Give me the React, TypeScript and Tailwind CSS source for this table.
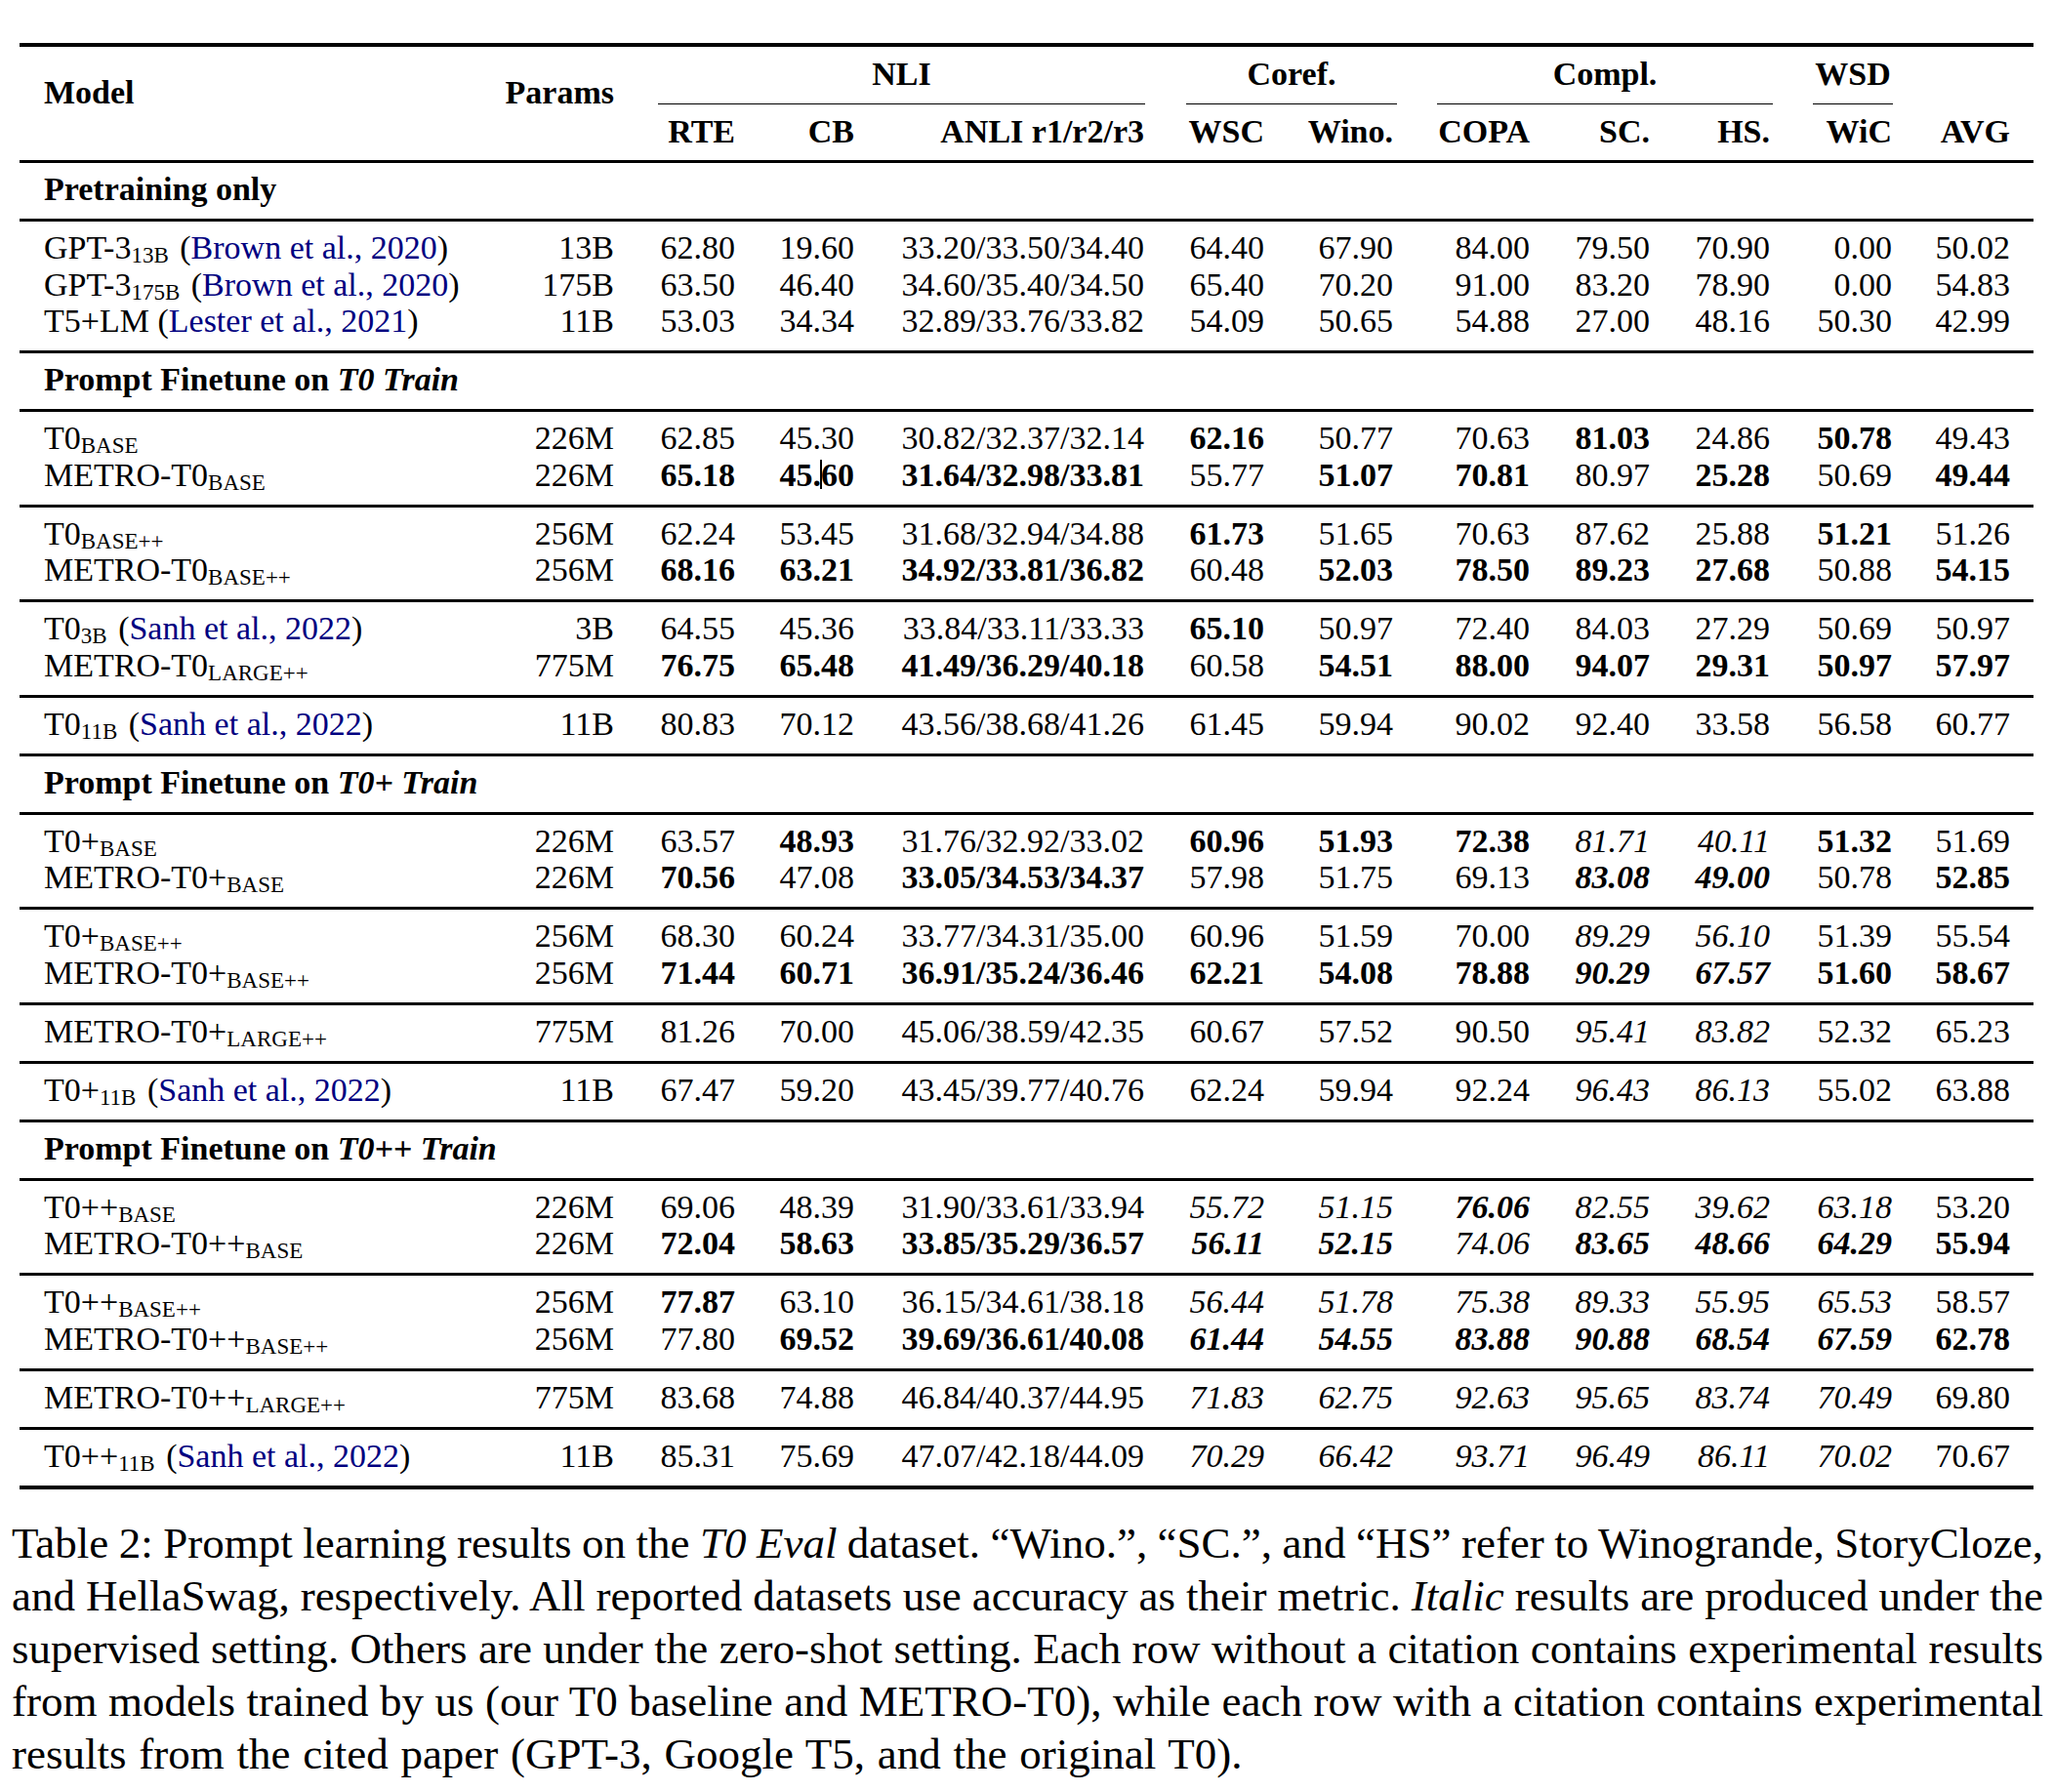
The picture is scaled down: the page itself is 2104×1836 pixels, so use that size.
import React from "react";

const GRID =
  "grid grid-cols-[455px_129px_124px_122px_297px_123px_132px_140px_123px_123px_125px_121px]";

type Row = { m: string; s?: string; cite?: string; p: string; v: string[] };

function Num({ c }: { c: string }) {
  let cls = "text-right whitespace-nowrap";
  let t = c;
  if (c.startsWith("bi:")) {
    cls += " font-bold italic";
    t = c.slice(3);
  } else if (c.startsWith("b:")) {
    cls += " font-bold";
    t = c.slice(2);
  } else if (c.startsWith("i:")) {
    cls += " italic";
    t = c.slice(2);
  }
  if (t.includes("|")) {
    const [a, b] = t.split("|");
    return (
      <div className={cls}>
        {a}
        <span className="relative inline-block w-0 h-0">
          <span className="absolute left-[-1px] top-[-27px] w-[1.5px] h-[30px] bg-black" />
        </span>
        {b}
      </div>
    );
  }
  return <div className={cls}>{t}</div>;
}

function Name({ m, s, cite }: { m: string; s?: string; cite?: string }) {
  return (
    <div className="whitespace-nowrap">
      {m}
      {s && <span className="text-[23px] leading-[0] align-[-4px]">{s}</span>}
      {cite && (
        <>
          {" "}
          <span className={s ? "ml-[3px]" : ""}>(</span>
          <span className="text-[#000080]">{cite}</span>
          {")"}
        </>
      )}
    </div>
  );
}

function Rule({ h = "h-[3px]" }: { h?: string }) {
  return <div className={`${h} bg-black`} />;
}

function Group({ rows }: { rows: Row[] }) {
  return (
    <div className={`${GRID} pl-[25px] pr-[24px] pt-[8px] pb-[11.5px]`}>
      {rows.map((r, i) => (
        <React.Fragment key={i}>
          <Name m={r.m} s={r.s} cite={r.cite} />
          <div className="text-right">{r.p}</div>
          {r.v.map((c, j) => (
            <Num key={j} c={c} />
          ))}
        </React.Fragment>
      ))}
    </div>
  );
}

function SectionTitle({ children }: { children: React.ReactNode }) {
  return <div className="pl-[25px] pt-[8px] pb-[11.5px] font-bold">{children}</div>;
}

const B = "Brown et al., 2020";
const S = "Sanh et al., 2022";

const sections: { title: React.ReactNode; groups: Row[][] }[] = [
  {
    title: <>Pretraining only</>,
    groups: [
      [
        { m: "GPT-3", s: "13B", cite: B, p: "13B", v: ["62.80", "19.60", "33.20/33.50/34.40", "64.40", "67.90", "84.00", "79.50", "70.90", "0.00", "50.02"] },
        { m: "GPT-3", s: "175B", cite: B, p: "175B", v: ["63.50", "46.40", "34.60/35.40/34.50", "65.40", "70.20", "91.00", "83.20", "78.90", "0.00", "54.83"] },
        { m: "T5+LM", cite: "Lester et al., 2021", p: "11B", v: ["53.03", "34.34", "32.89/33.76/33.82", "54.09", "50.65", "54.88", "27.00", "48.16", "50.30", "42.99"] },
      ],
    ],
  },
  {
    title: (
      <>
        Prompt Finetune on <i>T0 Train</i>
      </>
    ),
    groups: [
      [
        { m: "T0", s: "BASE", p: "226M", v: ["62.85", "45.30", "30.82/32.37/32.14", "b:62.16", "50.77", "70.63", "b:81.03", "24.86", "b:50.78", "49.43"] },
        { m: "METRO-T0", s: "BASE", p: "226M", v: ["b:65.18", "b:45.|60", "b:31.64/32.98/33.81", "55.77", "b:51.07", "b:70.81", "80.97", "b:25.28", "50.69", "b:49.44"] },
      ],
      [
        { m: "T0", s: "BASE++", p: "256M", v: ["62.24", "53.45", "31.68/32.94/34.88", "b:61.73", "51.65", "70.63", "87.62", "25.88", "b:51.21", "51.26"] },
        { m: "METRO-T0", s: "BASE++", p: "256M", v: ["b:68.16", "b:63.21", "b:34.92/33.81/36.82", "60.48", "b:52.03", "b:78.50", "b:89.23", "b:27.68", "50.88", "b:54.15"] },
      ],
      [
        { m: "T0", s: "3B", cite: S, p: "3B", v: ["64.55", "45.36", "33.84/33.11/33.33", "b:65.10", "50.97", "72.40", "84.03", "27.29", "50.69", "50.97"] },
        { m: "METRO-T0", s: "LARGE++", p: "775M", v: ["b:76.75", "b:65.48", "b:41.49/36.29/40.18", "60.58", "b:54.51", "b:88.00", "b:94.07", "b:29.31", "b:50.97", "b:57.97"] },
      ],
      [
        { m: "T0", s: "11B", cite: S, p: "11B", v: ["80.83", "70.12", "43.56/38.68/41.26", "61.45", "59.94", "90.02", "92.40", "33.58", "56.58", "60.77"] },
      ],
    ],
  },
  {
    title: (
      <>
        Prompt Finetune on <i>T0+ Train</i>
      </>
    ),
    groups: [
      [
        { m: "T0+", s: "BASE", p: "226M", v: ["63.57", "b:48.93", "31.76/32.92/33.02", "b:60.96", "b:51.93", "b:72.38", "i:81.71", "i:40.11", "b:51.32", "51.69"] },
        { m: "METRO-T0+", s: "BASE", p: "226M", v: ["b:70.56", "47.08", "b:33.05/34.53/34.37", "57.98", "51.75", "69.13", "bi:83.08", "bi:49.00", "50.78", "b:52.85"] },
      ],
      [
        { m: "T0+", s: "BASE++", p: "256M", v: ["68.30", "60.24", "33.77/34.31/35.00", "60.96", "51.59", "70.00", "i:89.29", "i:56.10", "51.39", "55.54"] },
        { m: "METRO-T0+", s: "BASE++", p: "256M", v: ["b:71.44", "b:60.71", "b:36.91/35.24/36.46", "b:62.21", "b:54.08", "b:78.88", "bi:90.29", "bi:67.57", "b:51.60", "b:58.67"] },
      ],
      [
        { m: "METRO-T0+", s: "LARGE++", p: "775M", v: ["81.26", "70.00", "45.06/38.59/42.35", "60.67", "57.52", "90.50", "i:95.41", "i:83.82", "52.32", "65.23"] },
      ],
      [
        { m: "T0+", s: "11B", cite: S, p: "11B", v: ["67.47", "59.20", "43.45/39.77/40.76", "62.24", "59.94", "92.24", "i:96.43", "i:86.13", "55.02", "63.88"] },
      ],
    ],
  },
  {
    title: (
      <>
        Prompt Finetune on <i>T0++ Train</i>
      </>
    ),
    groups: [
      [
        { m: "T0++", s: "BASE", p: "226M", v: ["69.06", "48.39", "31.90/33.61/33.94", "i:55.72", "i:51.15", "bi:76.06", "i:82.55", "i:39.62", "i:63.18", "53.20"] },
        { m: "METRO-T0++", s: "BASE", p: "226M", v: ["b:72.04", "b:58.63", "b:33.85/35.29/36.57", "bi:56.11", "bi:52.15", "i:74.06", "bi:83.65", "bi:48.66", "bi:64.29", "b:55.94"] },
      ],
      [
        { m: "T0++", s: "BASE++", p: "256M", v: ["b:77.87", "63.10", "36.15/34.61/38.18", "i:56.44", "i:51.78", "i:75.38", "i:89.33", "i:55.95", "i:65.53", "58.57"] },
        { m: "METRO-T0++", s: "BASE++", p: "256M", v: ["77.80", "b:69.52", "b:39.69/36.61/40.08", "bi:61.44", "bi:54.55", "bi:83.88", "bi:90.88", "bi:68.54", "bi:67.59", "b:62.78"] },
      ],
      [
        { m: "METRO-T0++", s: "LARGE++", p: "775M", v: ["83.68", "74.88", "46.84/40.37/44.95", "i:71.83", "i:62.75", "i:92.63", "i:95.65", "i:83.74", "i:70.49", "69.80"] },
      ],
      [
        { m: "T0++", s: "11B", cite: S, p: "11B", v: ["85.31", "75.69", "47.07/42.18/44.09", "i:70.29", "i:66.42", "i:93.71", "i:96.49", "i:86.11", "i:70.02", "70.67"] },
      ],
    ],
  },
];

function Header() {
  return (
    <div
      className={`${GRID} grid-rows-[37.5px_auto_37.5px] pl-[25px] pr-[24px] pt-[9px] pb-[10.5px] font-bold`}
    >
      <div className="col-start-1 row-start-1 row-span-3 self-start mt-[18.5px]">Model</div>
      <div className="col-start-2 row-start-1 row-span-3 self-start mt-[18.5px] text-right">Params</div>

      <div className="col-start-3 col-span-3 row-start-1 ml-[45px] mr-[-1px] text-center">NLI</div>
      <div className="col-start-6 col-span-2 row-start-1 ml-[43px] mr-[-4px] text-center">Coref.</div>
      <div className="col-start-8 col-span-3 row-start-1 ml-[45px] mr-[-3px] text-center">Compl.</div>
      <div className="col-start-11 col-span-1 row-start-1 ml-[44px] mr-[-1px] text-center">WSD</div>

      <div className="col-start-3 col-span-3 row-start-2 ml-[45px] mr-[-1px] mt-[11px] mb-[9px] h-[1.5px] bg-black" />
      <div className="col-start-6 col-span-2 row-start-2 ml-[43px] mr-[-4px] mt-[11px] mb-[9px] h-[1.5px] bg-black" />
      <div className="col-start-8 col-span-3 row-start-2 ml-[45px] mr-[-3px] mt-[11px] mb-[9px] h-[1.5px] bg-black" />
      <div className="col-start-11 col-span-1 row-start-2 ml-[44px] mr-[-1px] mt-[11px] mb-[9px] h-[1.5px] bg-black" />

      <div className="col-start-3 row-start-3 text-right">RTE</div>
      <div className="col-start-4 row-start-3 text-right">CB</div>
      <div className="col-start-5 row-start-3 text-right">ANLI r1/r2/r3</div>
      <div className="col-start-6 row-start-3 text-right">WSC</div>
      <div className="col-start-7 row-start-3 text-right">Wino.</div>
      <div className="col-start-8 row-start-3 text-right">COPA</div>
      <div className="col-start-9 row-start-3 text-right">SC.</div>
      <div className="col-start-10 row-start-3 text-right">HS.</div>
      <div className="col-start-11 row-start-3 text-right">WiC</div>
      <div className="col-start-12 row-start-3 text-right">AVG</div>
    </div>
  );
}

export default function App() {
  return (
    <div className="w-[2104px] h-[1836px] bg-white text-black font-['Liberation_Serif','Times_New_Roman',serif] pt-[44px]">
      <div className="ml-[20px] w-[2063px] text-[34px] leading-[37.5px]">
        <Rule h="h-[4px]" />
        <Header />
        {sections.map((sec, i) => (
          <React.Fragment key={i}>
            <Rule />
            <SectionTitle>{sec.title}</SectionTitle>
            {sec.groups.map((g, j) => (
              <React.Fragment key={j}>
                <Rule />
                <Group rows={g} />
              </React.Fragment>
            ))}
          </React.Fragment>
        ))}
        <Rule h="h-[4px]" />
      </div>
      <div className="ml-[12px] mt-[28px] w-[2081px] text-[45px] leading-[54px]">
        <div className="text-justify [text-align-last:justify] [word-spacing:-6px]">
          Table 2: Prompt learning results on the <i>T0 Eval</i> dataset. “Wino.”, “SC.”, and “HS” refer to Winogrande, StoryCloze,
        </div>
        <div className="text-justify [text-align-last:justify] [word-spacing:-6px]">
          and HellaSwag, respectively. All reported datasets use accuracy as their metric. <i>Italic</i> results are produced under the
        </div>
        <div className="text-justify [text-align-last:justify] [word-spacing:-6px]">
          supervised setting. Others are under the zero-shot setting. Each row without a citation contains experimental results
        </div>
        <div className="text-justify [text-align-last:justify] [word-spacing:-6px]">
          from models trained by us (our T0 baseline and METRO-T0), while each row with a citation contains experimental
        </div>
        <div className="[word-spacing:1.5px]">results from the cited paper (GPT-3, Google T5, and the original T0).</div>
      </div>
    </div>
  );
}
